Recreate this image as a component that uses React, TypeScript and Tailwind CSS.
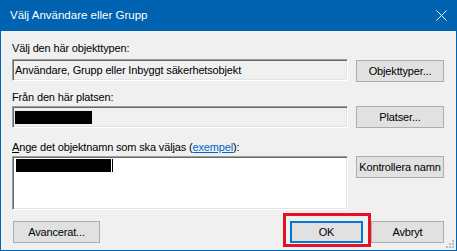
import React from "react";

const font = { fontFamily: '"Liberation Sans", Arial, sans-serif' };

const WinButton = ({
  label,
  className = "",
  primary = false,
}: {
  label: string;
  className?: string;
  primary?: boolean;
}) => (
  <button
    className={
      "h-[22px] bg-[#e1e1e1] text-[11px] tracking-[-0.15px] whitespace-nowrap text-black flex items-center justify-center " +
      (primary ? "border-2 border-[#0078d7] " : "border border-[#adadad] ") +
      className
    }
  >
    {label}
  </button>
);

const sunken =
  "border border-t-[#a0a0a0] border-l-[#a0a0a0] border-r-white border-b-white shadow-[inset_1px_1px_0_#696969,inset_-1px_-1px_0_#e3e3e3]";

export default function App() {
  return (
    <div
      className="w-[457px] h-[251px] bg-[#f0f0f0] border-x border-b border-[#0063b1] flex flex-col relative text-black text-[11px] tracking-[-0.15px]"
      style={font}
    >
      <div className="h-[31px] bg-[#0063b1] flex items-center justify-between pl-[9px] pr-[9px] text-white">
        <span className="text-[11.5px] tracking-normal">Välj Användare eller Grupp</span>
        <svg width="11" height="11" viewBox="0 0 11 11">
          <path d="M0.5 0.5 L10.5 10.5 M10.5 0.5 L0.5 10.5" stroke="white" strokeWidth="1" />
        </svg>
      </div>

      <div className="flex flex-col pl-[11px] pr-[11px]">
        <div className="h-[16px] leading-[16px] mt-[9px]">Välj den här objekttypen:</div>
        <div className="flex items-start gap-[8px] mt-[3px]">
          <div className={"w-[336px] h-[22px] bg-[#f0f0f0] flex items-center pl-[2px] whitespace-nowrap " + sunken}>
            Användare, Grupp eller Inbyggt säkerhetsobjekt
          </div>
          <WinButton label="Objekttyper..." className="w-[88px] mt-[1px]" />
        </div>

        <div className="h-[16px] leading-[16px] mt-[7px]">Från den här platsen:</div>
        <div className="flex items-start gap-[8px] mt-[1px]">
          <div className={"w-[336px] h-[22px] bg-[#f0f0f0] flex items-center pl-[2px] " + sunken}>
            <div className="w-[77px] h-[13px] bg-black" />
          </div>
          <WinButton label="Platser..." className="w-[88px]" />
        </div>

        <div className="h-[16px] leading-[16px] mt-[11px] whitespace-nowrap">
          <u>A</u>nge det objektnamn som ska väljas (
          <span className="text-[#0066cc] underline">exempel</span>):
        </div>
        <div className="flex items-start gap-[8px] mt-[1px]">
          <div className={"w-[336px] h-[54px] bg-white flex items-start pl-[3px] pt-[2px] " + sunken}>
            <div className="w-[95px] h-[13px] bg-black" />
            <div className="w-[1px] h-[13px] bg-black ml-[1px]" />
          </div>
          <WinButton label="Kontrollera namn" className="w-[88px]" />
        </div>

        <div className="flex items-start mt-[11px]">
          <WinButton label="Avancerat..." className="w-[87px] ml-[1px]" />
          <div className="relative ml-[190px]">
            <WinButton label="OK" primary className="w-[73px]" />
            <div className="absolute left-[-7px] top-[-8px] w-[88px] h-[34px] border-[3px] border-[#e81123] pointer-events-none" />
          </div>
          <WinButton label="Avbryt" className="w-[73px] ml-[8px]" />
        </div>
      </div>

      <svg className="absolute right-[2px] bottom-[2px]" width="8" height="8" viewBox="0 0 8 8">
        <rect x="6" y="0" width="2" height="2" fill="#bcbcbc" />
        <rect x="3" y="3" width="2" height="2" fill="#bcbcbc" />
        <rect x="6" y="3" width="2" height="2" fill="#bcbcbc" />
        <rect x="0" y="6" width="2" height="2" fill="#bcbcbc" />
        <rect x="3" y="6" width="2" height="2" fill="#bcbcbc" />
        <rect x="6" y="6" width="2" height="2" fill="#bcbcbc" />
      </svg>
    </div>
  );
}
